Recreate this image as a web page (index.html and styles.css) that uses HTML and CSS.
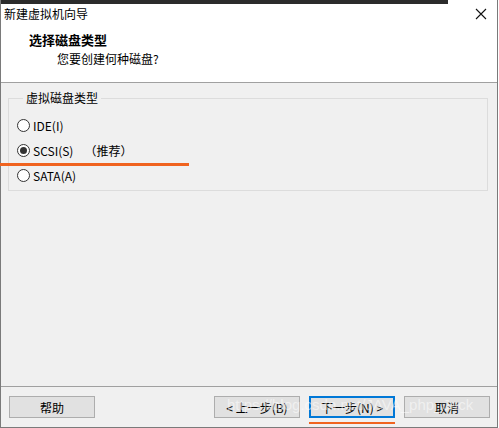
FILE: index.html
```html
<!DOCTYPE html>
<html lang="zh-CN">
<head>
  <meta charset="UTF-8" />
  <meta name="viewport" content="width=device-width, initial-scale=1.0"/>
  <title>新建虚拟机向导</title>
  <link rel="stylesheet" href="styles.css">
</head>
<body>

  <div class="window">
    <div class="strip"></div>

    <div class="header">
      <div class="titlebar">
        <span>新建虚拟机向导</span>
        <svg class="close" width="12" height="12" viewBox="0 0 12 12">
          <path d="M1 1 L11 11 M11 1 L1 11" stroke="#111" stroke-width="1.1" fill="none"/>
        </svg>
      </div>
      <h1>选择磁盘类型</h1>
      <p class="sub">您要创建何种磁盘?</p>
    </div>

    <div class="content">
      <fieldset class="group">
        <legend>虚拟磁盘类型</legend>
        <label class="radio"><span class="dot"></span>IDE(I)</label>
        <label class="radio checked"><span class="dot"></span>SCSI(S)<span class="hint">（推荐）</span></label>
        <label class="radio"><span class="dot"></span>SATA(A)</label>
      </fieldset>
      <div class="mark mark-scsi"></div>
    </div>

    <div class="footer">
      <button class="btn">帮助</button>
      <div class="nav">
        <button class="btn">&lt; 上一步(B)</button>
        <button class="btn primary">下一步(N) &gt;<span class="mark mark-next"></span></button>
        <button class="btn">取消</button>
      </div>
      <span class="watermark">https://blog.csdn.net/JAVA_php_Jack</span>
    </div>
  </div>

</body>
</html>
```

FILE: styles.css
```css
* { margin: 0; padding: 0; box-sizing: border-box; }
body {
  font-family: "Noto Sans CJK SC", "Noto Sans", sans-serif;
  font-size: 12px;
  color: #000;
  background: #fff;
  width: 499px;
  height: 428px;
  overflow: hidden;
}

.window {
  position: relative;
  width: 498px;
  height: 428px;
  border-left: 1px solid #7a7a7a;
  border-right: 1px solid #7a7a7a;
  border-bottom: 1px solid #7a7a7a;
  display: flex;
  flex-direction: column;
}

.strip {
  position: absolute;
  top: 0;
  left: 0;
  width: 447px;
  height: 4px;
  background: #2b2b2b;
}

.header {
  background: #fff;
  height: 83px;
  border-bottom: 1px solid #a0a0a0;
}

.titlebar {
  height: 27px;
  display: flex;
  align-items: center;
  justify-content: space-between;
  padding: 0 10px 0 3px;
}

h1 {
  font-size: 13px;
  font-weight: bold;
  margin: 4px 0 0 28px;
  line-height: 18px;
}

.sub {
  margin: 1px 0 0 56px;
  line-height: 18px;
}

.content {
  position: relative;
  flex: 1;
  background: #f0f0f0;
  padding: 8px 9px 0 7px;
  border-bottom: 1px solid #a0a0a0;
}

.group {
  border: 1px solid #dcdcdc;
  height: 100px;
  padding: 11px 0 0 8px;
  display: flex;
  flex-direction: column;
  gap: 6px;
}

.group legend {
  padding: 0 3px;
  margin-left: 6px;
  line-height: 14px;
}

.radio {
  display: flex;
  align-items: center;
  height: 19px;
  gap: 3px;
}

.dot {
  width: 13px;
  height: 13px;
  border: 1px solid #333;
  border-radius: 50%;
  background: #fff;
  display: flex;
  align-items: center;
  justify-content: center;
}

.checked .dot::after {
  content: "";
  width: 7px;
  height: 7px;
  border-radius: 50%;
  background: #333;
}

.hint {
  margin-left: 8px;
}

.mark {
  position: absolute;
  background: #f0631f;
  height: 3px;
}

.mark-scsi {
  left: -1px;
  top: 80px;
  width: 189px;
}

.footer {
  position: relative;
  background: #f0f0f0;
  height: 40px;
  display: flex;
  align-items: flex-start;
  justify-content: space-between;
  padding: 9px 7px 0 8px;
}

.nav {
  display: flex;
  gap: 9px;
}

.btn {
  position: relative;
  width: 86px;
  height: 22px;
  font-family: inherit;
  font-size: 12px;
  background: #e1e1e1;
  border: 1px solid #adadad;
  color: #000;
}

.btn.primary {
  border: 2px solid #0078d7;
}

.mark-next {
  left: -2px;
  top: 24px;
  width: 86px;
  height: 2px;
}

.watermark {
  position: absolute;
  left: 226px;
  top: 9px;
  font-family: "Liberation Sans", sans-serif;
  font-size: 15px;
  color: rgba(255, 255, 255, 0.5);
  pointer-events: none;
}
```
